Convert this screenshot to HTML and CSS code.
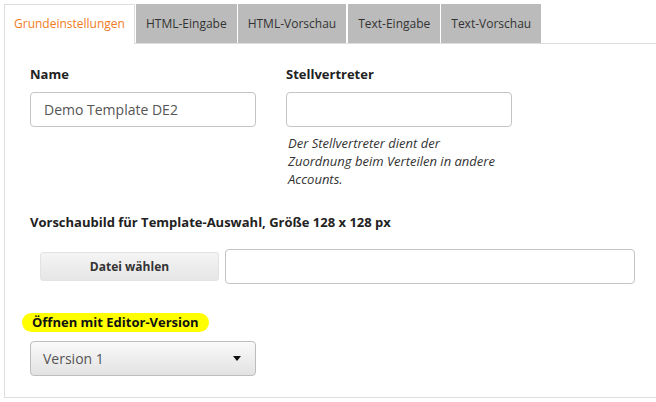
FILE: index.html
```html
<!DOCTYPE html>
<html lang="de">
<head>
    <meta charset="UTF-8">
    <meta name="viewport" content="width=device-width, initial-scale=1.0">
    <title>Template bearbeiten</title>
    <link rel="stylesheet" href="styles.css">
</head>
<body>
    <div class="wrapper">
        <ul class="tabs">
            <li class="tab active">Grundeinstellungen</li>
            <li class="tab">HTML-Eingabe</li>
            <li class="tab">HTML-Vorschau</li>
            <li class="tab">Text-Eingabe</li>
            <li class="tab">Text-Vorschau</li>
        </ul>

        <div class="panel">
            <div class="row-two">
                <div class="field">
                    <label class="label">Name</label>
                    <div class="input">Demo Template DE2</div>
                </div>
                <div class="field">
                    <label class="label">Stellvertreter</label>
                    <div class="input"></div>
                    <p class="help">Der Stellvertreter dient der<br>Zuordnung beim Verteilen in andere<br>Accounts.</p>
                </div>
            </div>

            <label class="label preview-label">Vorschaubild für Template-Auswahl, Größe 128 x 128 px</label>
            <div class="file-row">
                <div class="file-btn">Datei wählen</div>
                <div class="input file-name"></div>
            </div>

            <label class="label highlight">Öffnen mit Editor-Version</label>
            <div class="select">
                <span>Version 1</span>
                <span class="caret"></span>
            </div>
        </div>
    </div>
</body>
</html>
```

FILE: styles.css
```css
body {
    margin: 0;
    font-family: 'Open Sans', 'Liberation Sans', Arial, sans-serif;
    font-size: 13px;
    color: #222;
    background: #fff;
}
.wrapper {
    padding: 4px 0 0 4px;
}
.tabs {
    list-style: none;
    margin: 0;
    padding: 0;
    display: flex;
    height: 39px;
}
.tab {
    background: #bbbbbb;
    color: #333;
    font-size: 12px;
    line-height: 39px;
    padding: 0 10px;
    margin-left: 1px;
}
.tab:nth-child(4) {
    margin-left: 2px;
}
.tab.active {
    background: #fff;
    color: #f07c1e;
    margin-left: 0;
    padding: 0 9px;
    border: 1px solid #dedede;
    border-bottom: none;
    line-height: 38px;
    height: 40px;
    box-sizing: border-box;
    position: relative;
    z-index: 1;
}
.panel {
    border: 1px solid #dedede;
    border-right: none;
    padding: 21px 0 21px 25px;
}
.row-two {
    display: flex;
    gap: 30px;
}
.field {
    width: 226px;
}
.label {
    display: block;
    font-weight: bold;
    line-height: 18px;
    margin-bottom: 9px;
}
.input {
    box-sizing: border-box;
    height: 35px;
    border: 1px solid #c4c4c4;
    border-radius: 4px;
    padding: 0 13px;
    font-size: 14px;
    line-height: 33px;
    color: #555;
    background: #fff;
}
.help {
    margin: 7px 0 0 2px;
    font-style: italic;
    line-height: 18px;
    color: #333;
}
.preview-label {
    margin-top: 25px;
    margin-bottom: 18px;
}
.file-row {
    display: flex;
    align-items: center;
}
.file-btn {
    box-sizing: border-box;
    width: 179px;
    height: 29px;
    margin-left: 10px;
    border: 1px solid #e2e2e2;
    border-radius: 3px;
    background: linear-gradient(#f4f4f4, #e6e6e6);
    font-size: 12px;
    font-weight: bold;
    line-height: 27px;
    text-align: center;
    color: #333;
}
.file-name {
    width: 410px;
    margin-left: 6px;
}
.highlight {
    display: inline-block;
    background: #ffff00;
    border-radius: 10px;
    padding: 0 10px;
    margin: 29px 0 9px -8px;
    line-height: 19px;
    color: #111;
}
.select {
    box-sizing: border-box;
    width: 226px;
    height: 35px;
    border: 1px solid #bdbdbd;
    border-radius: 4px;
    background: linear-gradient(#fafafa, #e2e2e2);
    padding: 0 14px 0 12px;
    display: flex;
    align-items: center;
    justify-content: space-between;
    font-size: 14px;
    color: #555;
}
.caret {
    width: 0;
    height: 0;
    border-left: 4px solid transparent;
    border-right: 4px solid transparent;
    border-top: 5px solid #111;
}
```
